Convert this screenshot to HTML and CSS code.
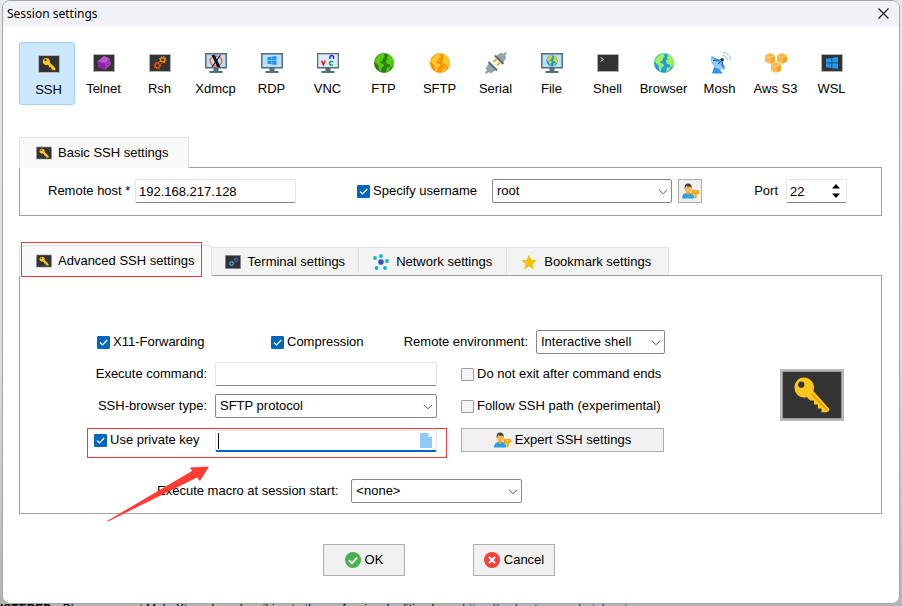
FILE: index.html
```html
<!DOCTYPE html>
<html lang="en">
<head>
<meta charset="utf-8">
<title>Session settings</title>
<link rel="stylesheet" href="styles.css">
</head>
<body>
<svg class="defs" aria-hidden="true">
  <defs>
    <symbol id="term" viewBox="0 0 22 18"><path fill="#b5b5b5" d="M0 0h22v18H0z"/><path fill="#333" d="M1 1h20v16H1z"/></symbol>
    <symbol id="key" viewBox="0 0 64 52">
      <path fill="#b9b9b9" d="M0 0h64v52H0z"/><path fill="#777" d="M2.500 2.500h59v47h-59z"/><path fill="#333" d="M3 3h58v46H3z"/>
      <path fill="#ffc61c" fill-rule="evenodd" d="M24 8.500c5.500 0 10 4.500 10 10 0 1.300-.2 2.500-.7 3.600L49 39.500c1 1.300-.5 3.700-2.500 3.700h-5v-3.700h-3.700v-4H34v-4h-4l-3.300-3.500c-1 .4-1.700.5-2.700.5-5.500 0-9.500-4.500-9.500-10s4-10 9.500-10zM21.300 12.600a3.100 3.100 0 1 0 0 6.200 3.100 3.100 0 0 0 0-6.200z"/>
      <path fill="#dfa20e" d="M31 25.500l1.500-1L48.500 41l-1.500 1z"/>
    </symbol>
    <symbol id="keysmall" viewBox="0 0 22 18">
      <path fill="#b5b5b5" d="M0 0h22v18H0z"/><path fill="#333" d="M1 1h20v16H1z"/>
      <path fill="#ffc61c" d="M8.500 3a3.500 3.500 0 0 1 3.300 4.600l5.500 5.400v2.300h-3v-1.500h-1.400v-1.500H11v-1.500l-1.600-1A3.500 3.500 0 1 1 8.500 3z"/><circle cx="7.600" cy="5.200" r="1.100" fill="#333"/>
    </symbol>
    <symbol id="monitor" viewBox="0 0 22 20">
      <path fill="#546e7a" d="M0 0h22v15.500H0zM8.500 15.500h5V18h-5zM4.500 18h13v2h-13z"/><path fill="#bbdefb" d="M1.500 1.500h19V14h-19z"/>
    </symbol>
    <symbol id="windows" viewBox="0 0 12 12"><path fill="#2196f3" d="M0 1.700L5.500.9v4.700H0zM6.200.8L12 0v5.600H6.200zM0 6.300h5.500v4.800L0 10.300zM6.200 6.300H12V12l-5.800-.8z"/></symbol>
    <symbol id="lands" viewBox="0 0 20 20">
      <path d="M2.500 5C4.500 2 7 .5 10 .2l1 .3-1 2 1 1.500-2 1-.5 2.500L6 8.500l1 1.500 2.500 1 .5 2-2.500 2-.5 3.500-1.500-.5-.5-3-.5-2.500L2 10 .6 8zM12.500 1l3 1c2.500 2 4.200 4.500 4.300 8l-1 3.500-2 .5-1-2.500-3-.5-1-3 2-2-1-1.500 1.200-1.500zM13 14.500l4-.5-2 3.500-3 1.800z"/>
    </symbol>
    <symbol id="user" viewBox="0 0 18 16">
      <path fill="#29a3e8" d="M0 16c0-4 2-5.500 4.500-6h4c2.500.5 4.500 2 4.500 6z"/><path fill="#ff9800" d="M4.500 8.500h4V11c-1 1.500-3 1.500-4 0z"/>
      <ellipse cx="6.500" cy="5.500" rx="3.400" ry="4.200" fill="#ffb74d"/><path fill="#424242" d="M2.800 6C2.300 2.500 3.500 0 6.500 0s4.300 2.500 3.700 6l-.9-2.500c-2 0-3.500-.2-4.600-.9L3.700 4z"/>
      <path fill="#ffa000" fill-rule="evenodd" d="M11 7h6l1 1v2.500l-1 1h-1.400V15l-1 1-1.300-1v-3.500H11l-1-1V8zM13 8.200v1.200h2.400V8.200z"/>
    </symbol>
    <symbol id="gear" viewBox="0 0 12 12">
      <g fill="none" stroke="currentColor"><circle cx="6" cy="6" r="3.400" stroke-width="2"/><circle cx="6" cy="6" r="5" stroke-width="2" stroke-dasharray="1.960 1.967"/></g>
    </symbol>
    <symbol id="cube" viewBox="0 0 10 11">
      <path fill="#ffb547" d="M5 0l5 2.200v6.300L5 11 0 8.500V2.200z"/><path fill="#fba21c" d="M5.400 4.900L10 3v5.500l-4.600 2.300z"/><path d="M0 2.500l5 2 5-2M5 4.500V11" fill="none" stroke="#ffe2b0" stroke-width=".6"/>
    </symbol>
    <symbol id="chevron" viewBox="0 0 10 6"><path d="M1 .8l4 4 4-4" fill="none" stroke="#555"/></symbol>
    <symbol id="check" viewBox="0 0 13 13"><path d="M3 6.500l2.500 2.500L10.200 4" fill="none" stroke="#fff" stroke-width="1.200"/></symbol>
  </defs>
</svg>

<div class="backdrop" aria-hidden="true">
  <p class="status"><b>ISTERED</b> - Please support MobaXterm by subscribing to the professional edition here: <span>https://mobaxterm.mobatek.net</span></p>
</div>

<main class="window">
  <header class="titlebar">
    <h1>Session settings</h1>
    <button class="close" aria-label="Close"><svg viewBox="0 0 11 11"><path d="M.5.5l10 10M10.500.5l-10 10" stroke="#111" stroke-width="1.200"/></svg></button>
  </header>

  <nav class="types">
    <button class="type selected"><svg viewBox="0 0 22 22"><use href="#keysmall" y="2" width="22" height="18"/></svg>SSH</button>
    <button class="type"><svg viewBox="0 0 22 22"><use href="#term" y="2" width="22" height="18"/><path fill="#ab47bc" d="M11 4l5.500 2.500L18 12l-5.500 5.500-7-2-1-6z"/><path fill="#8e24aa" d="M4.500 9.500l7.500 1.500.5 6.500-7-2z"/><path fill="#ba55cc" d="M11 4l5.500 2.500L12 11 4.500 9.500z"/><path fill="#a03bb5" d="M16.500 6.500L18 12l-5.500 5.500L12 11z"/></svg>Telnet</button>
    <button class="type"><svg viewBox="0 0 22 22"><use href="#term" y="2" width="22" height="18"/><g color="#e65100"><use href="#gear" x="4.500" y="9.500" width="8" height="8"/></g><g color="#ff9800"><use href="#gear" x="10" y="4" width="7.500" height="7.500"/></g></svg>Rsh</button>
    <button class="type"><svg viewBox="0 0 22 22"><use href="#monitor" y="1" width="22" height="20"/><ellipse cx="11" cy="9" rx="6" ry="5" fill="none" stroke="#f4693f" stroke-width="1.400"/><path fill="#111" d="M6.500 3h3.300l5.700 12h-3.300z"/><path d="M15.500 3L7 15" stroke="#111" stroke-width="1.100"/></svg>Xdmcp</button>
    <button class="type"><svg viewBox="0 0 22 22"><use href="#monitor" y="1" width="22" height="20"/><use href="#windows" x="6" y="4" width="10" height="9"/></svg>RDP</button>
    <button class="type"><svg viewBox="0 0 22 22"><use href="#monitor" y="1" width="22" height="20"/><path fill="#dcebfa" d="M1.500 2.500h19V15h-19z"/><g fill="none" stroke-width="1.400"><path stroke="#e8111c" d="M4.500 8.500L6.300 13l1.900-4.500"/><path stroke="#2222ee" d="M13 7V4.500q1.800-2 3.500 0V7"/><path stroke="#0a9a28" d="M16 9.800q-3.500-1-3.500 1.500t3.500 1.500"/></g></svg>VNC</button>
    <button class="type"><svg viewBox="0 0 22 22"><circle cx="11" cy="11" r="10" fill="#2e7d0f"/><use href="#lands" x="1" y="1" width="20" height="20" fill="#55cc11"/></svg>FTP</button>
    <button class="type"><svg viewBox="0 0 22 22"><circle cx="11" cy="11" r="10" fill="#ff8f00"/><use href="#lands" x="1" y="1" width="20" height="20" fill="#ffc928"/></svg>SFTP</button>
    <button class="type"><svg viewBox="0 0 22 22"><g transform="rotate(45 11 11)"><path fill="#90a4ae" d="M7 1.500q0-2 2-2h.8v-3h2.400v3h.8q2 0 2 2l1 5H6zM6 15.500h10l-1 5q0 2-2 2h-.8v3H9.800v-3H9q-2 0-2-2z"/><path fill="#546e7a" d="M5 5.500h12v2H5zM5 14.500h12v2H5z"/><path fill="#ffa726" d="M7.500 7.500h2V12h-2zM12.500 7.500h2V12h-2z"/></g></svg>Serial</button>
    <button class="type"><svg viewBox="0 0 22 22"><use href="#monitor" y="1" width="22" height="20"/><circle cx="11" cy="8.800" r="5.600" fill="#2196d8"/><use href="#lands" x="5.400" y="3.200" width="11.200" height="11.200" fill="#c5d92e"/></svg>File</button>
    <button class="type"><svg viewBox="0 0 22 22"><use href="#term" y="2" width="22" height="18"/><path d="M3.500 5.500l3 2-3 2" fill="none" stroke="#ddd"/></svg>Shell</button>
    <button class="type"><svg viewBox="0 0 22 22"><circle cx="11" cy="11" r="10" fill="#2196f3"/><use href="#lands" x="1" y="1" width="20" height="20" fill="#9cf54d"/></svg>Browser</button>
    <button class="type"><svg viewBox="0 0 22 22"><path fill="#2f95ea" d="M5 15l5 1 2 3.500 2 2H3z"/><path fill="#90caf9" d="M2 5c-1.500 7 5 14 14 12.500z"/><path fill="#5aaef2" d="M2 5l14 12.500c1-2.500-2-6-5.500-9S3.500 3.500 2 5z"/><path d="M4 8.500l9-.7 1 7.500M9 12l4-4" fill="none" stroke="#25547d"/><circle cx="13.200" cy="7.800" r="1.700" fill="#172d7a"/><path d="M14 3.500q4 .5 4.500 5M14 .5q7 .5 7.500 7.500" fill="none" stroke="#64b5f6" stroke-dasharray="3 1"/></svg>Mosh</button>
    <button class="type"><svg viewBox="0 0 22 22"><use href="#cube" x="0" y="1" width="10" height="11"/><use href="#cube" x="12" y="1" width="10" height="11"/><use href="#cube" x="6" y="10" width="10" height="11"/></svg>Aws S3</button>
    <button class="type"><svg viewBox="0 0 22 22"><use href="#term" y="2" width="22" height="18"/><use href="#windows" x="5" y="5" width="12" height="12"/></svg>WSL</button>
  </nav>

  <section class="group basic">
    <div class="tabs"><button class="tab active"><svg viewBox="0 0 16 14"><use href="#keysmall" width="16" height="14" /></svg>Basic SSH settings</button></div>
    <div class="panel basic-row">
      <label class="lead" for="host">Remote host *</label>
      <input class="field" id="host" type="text" value="192.168.217.128">
      <label class="tick username"><span class="box"><input type="checkbox" checked><svg><use href="#check"/></svg></span>Specify username</label>
      <span class="drop"><select aria-label="Username"><option>root</option></select><svg><use href="#chevron"/></svg></span>
      <button class="push manage" aria-label="Manage users"><svg class="user"><use href="#user"/></svg></button>
      <label class="port" for="port">Port</label>
      <span class="spin"><input class="field" id="port" type="number" value="22"><svg viewBox="0 0 8 14"><path d="M4 0l4 4.500H0zM4 14L0 9.500h8z"/></svg></span>
    </div>
  </section>

  <section class="group advanced">
    <div class="tabs">
      <button class="tab active marked"><svg viewBox="0 0 16 14"><use href="#keysmall" width="16" height="14"/></svg>Advanced SSH settings</button>
      <button class="tab"><svg viewBox="0 0 16 14"><path fill="#aaa" d="M0 0h16v14H0z"/><path fill="#2d3035" d="M.7.7h14.600v12.600H.7z"/><g color="#64b5f6"><use href="#gear" x="3.500" y="5.500" width="6" height="6"/></g><g color="#5c6bc0"><use href="#gear" x="8.500" y="2.500" width="5" height="5"/></g></svg>Terminal settings</button>
      <button class="tab"><svg class="tall" viewBox="0 0 16 16"><path d="M8 8L2 4M8 8V2M8 8l6-1M8 8l4 6M8 8l-4 6" stroke="#b8dfe8" stroke-width=".7"/><g fill="#00bcd4"><circle cx="2" cy="4" r="1.900"/><circle cx="8" cy="2" r="1.900"/><circle cx="14" cy="7" r="1.900"/><circle cx="12" cy="14" r="1.900"/><circle cx="3.500" cy="14" r="1.900"/></g><circle cx="8" cy="8" r="2.800" fill="#3f51b5"/></svg>Network settings</button>
      <button class="tab"><svg class="tall" viewBox="0 0 16 16"><path fill="#f4c20d" d="M8 .5l2.200 5.300 5.700.4-4.400 3.700 1.400 5.600L8 12.500l-4.900 3 1.400-5.600L.1 6.200l5.700-.4z"/></svg>Bookmark settings</button>
    </div>
    <div class="panel advanced-body">
      <div class="form">
        <div class="first">
          <label class="tick"><span class="box"><input type="checkbox" checked><svg><use href="#check"/></svg></span>X11-Forwarding</label>
          <label class="tick"><span class="box"><input type="checkbox" checked><svg><use href="#check"/></svg></span>Compression</label>
          <label class="right" for="env">Remote environment:</label>
          <span class="drop"><select id="env"><option>Interactive shell</option></select><svg><use href="#chevron"/></svg></span>
        </div>
        <div class="line">
          <label class="right" for="cmd">Execute command:</label>
          <input class="field" id="cmd" type="text">
          <label class="tick"><span class="box"><input type="checkbox"></span>Do not exit after command ends</label>
        </div>
        <div class="line">
          <label class="right" for="browser">SSH-browser type:</label>
          <span class="drop"><select id="browser"><option>SFTP protocol</option></select><svg><use href="#chevron"/></svg></span>
          <label class="tick"><span class="box"><input type="checkbox"></span>Follow SSH path (experimental)</label>
        </div>
        <div class="line keyline">
          <label class="tick"><span class="box"><input type="checkbox" checked><svg><use href="#check"/></svg></span>Use private key</label>
          <span class="file"><input class="field" type="text" aria-label="Private key file"><svg viewBox="0 0 12 15"><path fill="#90c8f8" d="M0 0h8l4 4v11H0z"/><path fill="#dceefc" d="M8 0l4 4H8z"/></svg></span>
          <button class="push"><svg class="user"><use href="#user"/></svg>Expert SSH settings</button>
        </div>
        <div class="macro">
          <label for="macro">Execute macro at session start:</label>
          <span class="drop"><select id="macro"><option>&lt;none&gt;</option></select><svg><use href="#chevron"/></svg></span>
          <svg class="arrow" viewBox="0 0 103 56"><path fill="#ff3b36" d="M0 55L85 5l-2-3.500L102 .5 93 15l-3-3.500L1 55.500z"/></svg>
        </div>
      </div>
      <svg class="bigkey"><use href="#key"/></svg>
    </div>
  </section>

  <footer class="actions">
    <button class="push"><svg viewBox="0 0 16 16"><circle cx="8" cy="8" r="8" fill="#4caf50"/><path d="M4 8.200l3 3L12.200 5.500" fill="none" stroke="#fff" stroke-width="1.800"/></svg>OK</button>
    <button class="push"><svg viewBox="0 0 16 16"><circle cx="8" cy="8" r="8" fill="#f44336"/><path d="M5 5l6 6M11 5l-6 6" stroke="#fff" stroke-width="2"/></svg>Cancel</button>
  </footer>
</main>
</body>
</html>
```

FILE: styles.css
```css
*, *::before, *::after { box-sizing: border-box; }
body {
  margin: 0;
  padding: 0 2px 2px;
  background: #c8c8c8;
  color: #000;
  font: 13px/16px "Liberation Sans", Arial, sans-serif;
}
svg { display: block; flex: none; overflow: visible; }
button, input, select { margin: 0; font: inherit; color: inherit; }
.defs { position: absolute; width: 0; height: 0; }

/* Parent application, visible only round the edges of the dialog */
.backdrop {
  position: fixed;
  inset: 0;
  background: linear-gradient(#e8e8e8, #dcdcdc 60%, #b4b4b4);
}
.status {
  position: absolute;
  inset: auto 0 0 0;
  height: 5px;
  margin: 0;
  overflow: hidden;
  font-size: 12px;
  white-space: nowrap;
}
.status span { color: #1a1aa8; }

.window {
  position: relative;
  border: 1px solid #a6a6a6;
  border-radius: 8px;
  background: #fff;
  overflow: hidden;
}
.titlebar {
  display: flex;
  align-items: center;
  justify-content: space-between;
  height: 25px;
  padding: 0 10px 0 4px;
  background: #f0f2f8;
}
.titlebar h1 { margin: 0; font: 12px/16px "Noto Sans", "Open Sans", sans-serif; }
.close { padding: 0; border: 0; background: none; }
.close svg { width: 11px; height: 11px; }

.types { display: flex; padding: 16px 16px 0; }
.type {
  display: flex;
  flex-direction: column;
  align-items: center;
  gap: 7px;
  width: 56px;
  height: 63px;
  padding: 9px 0 0 1px;
  border: 1px solid transparent;
  border-radius: 3px;
  background: none;
  white-space: nowrap;
}
.type svg { width: 22px; height: 22px; }
.type.selected { padding: 10px 0 0 3px; border-color: #99d1ff; background: #cce8ff; }

.group { margin: 0 17px 0 16px; }
.basic { margin-top: 32px; }
.advanced { margin-top: 29px; }
.tabs { display: flex; align-items: flex-end; }
.tab {
  display: flex;
  align-items: center;
  gap: 6px;
  height: 28px;
  padding: 0 14px;
  border: 1px solid #e3e3e3;
  border-width: 1px 1px 0 0;
  background: #f3f3f3;
  white-space: nowrap;
}
.tab + .tab { gap: 7px; }
.tab + .tab:nth-child(2) { padding: 0 13px; }
.tab svg { width: 16px; height: 14px; }
.tab svg.tall { height: 16px; }
.tab:last-child { padding: 0 17px 0 14px; }
.tab.active {
  position: relative;
  height: 31px;
  margin-bottom: -1px;
  padding: 0 16px;
  border-left-width: 1px;
  border-radius: 2px 2px 0 0;
  background: #f9f9f9;
}
.basic .tab.active { padding-right: 19px; }
.marked::after {
  content: "";
  position: absolute;
  inset: -4px 9px -1px 1px;
  border: 1px solid #f33;
}
.panel { border: 1px solid #a0a0a0; }

.field, select {
  width: 100%;
  height: 24px;
  padding: 0 4px;
  border: 1px solid #e5e5e5;
  border-bottom-color: #868686;
  border-radius: 2px;
  outline: 0;
  background: #fff;
}
.field { padding: 0 3px; }
.drop, .spin, .file { position: relative; display: block; }
select { appearance: none; border-color: #868686; }
.drop svg { position: absolute; right: 4px; top: 10px; width: 10px; height: 6px; pointer-events: none; }
.spin .field { appearance: textfield; }
.spin svg { position: absolute; right: 7px; top: 5px; width: 8px; height: 14px; pointer-events: none; }
.tick { display: flex; align-items: center; gap: 3px; white-space: nowrap; }
.box { position: relative; width: 13px; height: 13px; }
.box input {
  appearance: none;
  display: block;
  width: 13px;
  height: 13px;
  border: 1px solid #a0a0a0;
  border-radius: 1px;
  background: #f3f3f3;
}
.box input:checked { border-color: #0067c0; background: #0067c0; }
.box svg { position: absolute; inset: 0; width: 13px; height: 13px; pointer-events: none; }
.right { text-align: right; white-space: nowrap; }
.push {
  display: flex;
  align-items: center;
  justify-content: center;
  gap: 4px;
  height: 24px;
  padding: 0;
  border: 1px solid #adadad;
  background: #f0f0f0;
  white-space: nowrap;
}
.user { width: 17px; height: 16px; }

.basic-row {
  display: grid;
  grid-template-columns: 81px 161px 184px 180px 24px 72px 61px;
  column-gap: 6px;
  align-items: center;
  padding: 11px 0 12px 28px;
}
.basic-row .lead { white-space: nowrap; }
.username { padding-left: 55px; }
.port { text-align: right; padding-right: 2px; }

.advanced-body { display: flex; padding: 54px 37px 10px 74px; }
.form { width: 571px; }
.first {
  display: grid;
  grid-template-columns: 174px 1fr auto 129px;
  align-items: center;
  padding-left: 3px;
}
.first .right { padding-right: 8px; }
.line {
  display: grid;
  grid-template-columns: 113px 222px 219px;
  column-gap: 8px;
  align-items: center;
  margin-top: 8px;
}
.line > :last-child { margin-left: 16px; }
.line > .push { width: 203px; }
.keyline { position: relative; margin-top: 10px; }
.keyline::after {
  content: "";
  position: absolute;
  left: -7px;
  top: 0;
  width: 360px;
  height: 30px;
  border: 1px solid #f33;
  pointer-events: none;
}
.file .field { border-bottom: 2px solid #0067c0; height: 22px; }
.file { padding-top: 2px; }
.file::after { content: ""; position: absolute; left: 3px; top: 5px; width: 1px; height: 16px; background: #000; }
.file svg { position: absolute; right: 5px; top: 5px; width: 12px; height: 15px; }
.macro {
  position: relative;
  display: flex;
  align-items: center;
  gap: 13px;
  margin-top: 27px;
  padding-left: 63px;
}
.macro .drop { width: 171px; }
.arrow { position: absolute; left: 13px; top: -13px; width: 103px; height: 56px; pointer-events: none; }
.bigkey { width: 64px; height: 52px; margin: 39px 0 0 auto; }

.actions {
  display: flex;
  justify-content: center;
  gap: 68px;
  padding: 30px 24px 27px 0;
}
.actions .push { width: 82px; height: 32px; }
.actions svg { width: 16px; height: 16px; }
```
